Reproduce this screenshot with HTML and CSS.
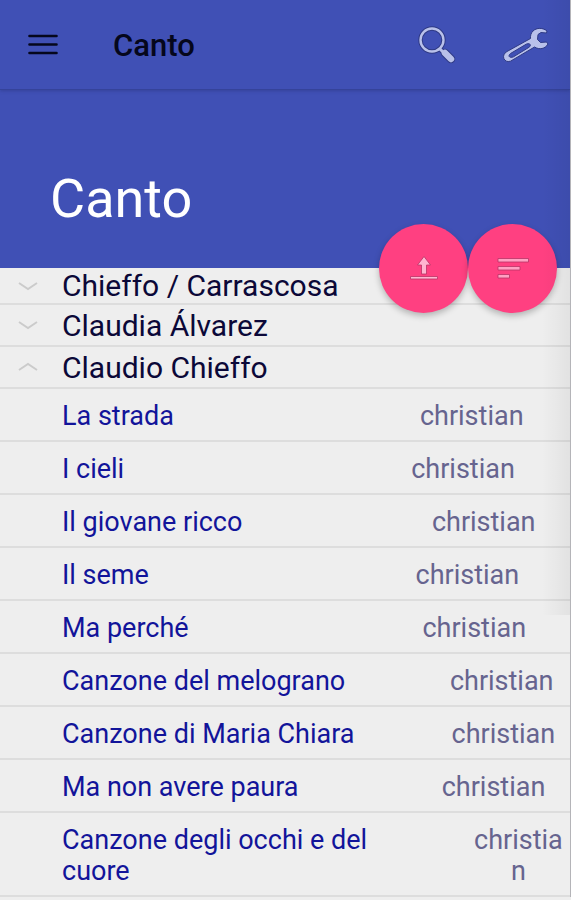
FILE: index.html
```html
<!DOCTYPE html>
<html lang="it">
<head>
<meta charset="utf-8">
<meta name="viewport" content="width=device-width, initial-scale=1">
<title>Canto</title>
<link rel="stylesheet" href="styles.css">
</head>
<body>
<header class="bar">
  <button class="icon-btn" aria-label="Menu">
    <svg width="30" height="22" viewBox="0 0 30 22" stroke="#05071c" stroke-width="2.6" stroke-linecap="round"><path d="M1.500 2h27M1.500 10.500h27M1.500 19h27"/></svg>
  </button>
  <div class="bar-title">Canto</div>
  <button class="icon-btn" aria-label="Cerca">
    <svg width="40" height="40" viewBox="0 0 40 40" fill="none" stroke-linecap="round">
      <g stroke="#2f3a85"><circle cx="15" cy="15" r="11.5" stroke-width="4.400"/><path d="M23 24l3 3" stroke-width="5"/><path d="M28 28l6 6" stroke-width="8.500"/></g>
      <g stroke="#b9c1ea"><circle cx="15" cy="15" r="11.5" stroke-width="2.400"/><path d="M23 24l4 4" stroke-width="3"/><path d="M28 28l6 6" stroke-width="6.5"/></g>
    </svg>
  </button>
  <button class="icon-btn wrench" aria-label="Impostazioni">
    <svg width="48" height="40" viewBox="0 0 48 40">
      <path fill="#b9c1ea" fill-rule="evenodd" stroke="#2f3a85" stroke-width="1" stroke-linejoin="round" d="M46 6C42 2.500 35.500 2.500 32 6C30 8 29.300 10.500 29.500 13.500L6 26.500C-0.500 30 3 38.500 9.500 36.200L33.500 22C38.500 25 44 24 47 19L45.500 17L39.500 17.500L36.500 14.500L37 9.500L40 7.500L45.500 8ZM9.500 28.500L25.500 19C29.500 17.800 30.500 20.500 28 22.300L12.500 31.800C8.500 33.500 6.500 31 9.500 28.500Z"/>
    </svg>
  </button>
</header>
<section class="hero">
  <h1>Canto</h1>
  <div class="fabs">
    <button class="fab" aria-label="Carica">
      <svg width="32" height="28" viewBox="0 0 32 28" fill="#ffb5d0" stroke="#b93366" stroke-width="0.800"><path d="M16 1.500l6.500 8.500h-4v9h-5v-9h-4zM2.500 21.500h27v2.500h-27z"/></svg>
    </button>
    <button class="fab" aria-label="Ordina">
      <svg width="34" height="24" viewBox="0 0 34 24" fill="#ffa0c2" stroke="#b93366" stroke-width="0.800"><path d="M2 1.500h30.500V5H2zM2 9.500h22V13H2zM2 17.500h11.500V21H2z"/></svg>
    </button>
  </div>
</section>
<main>
  <button class="group"><svg width="20" height="10" viewBox="0 0 20 10"><path d="M1 2l9 6 9-6"/></svg><span>Chieffo / Carrascosa</span></button>
  <button class="group"><svg width="20" height="10" viewBox="0 0 20 10"><path d="M1 2l9 6 9-6"/></svg><span>Claudia Álvarez</span></button>
  <button class="group" aria-expanded="true"><svg width="20" height="10" viewBox="0 0 20 10"><path d="M1 8l9-6 9 6"/></svg><span>Claudio Chieffo</span></button>
  <ul class="songs">
    <li><a href="#">La strada</a><span>christian</span></li>
    <li><a href="#">I cieli</a><span>christian</span></li>
    <li><a href="#">Il giovane ricco</a><span>christian</span></li>
    <li><a href="#">Il seme</a><span>christian</span></li>
    <li><a href="#">Ma perché</a><span>christian</span></li>
    <li><a href="#">Canzone del melograno</a><span>christian</span></li>
    <li><a href="#">Canzone di Maria Chiara</a><span>christian</span></li>
    <li><a href="#">Ma non avere paura</a><span>christian</span></li>
    <li><a href="#">Canzone degli occhi e del cuore</a><span>christian</span></li>
  </ul>
</main>
<div class="edge"></div>
</body>
</html>
```
FILE: styles.css
```css
* { box-sizing: border-box; }
body {
  position: relative;
  margin: 0;
  background: #eeeeee;
  border-right: 1px solid #b4b4b8;
  font-family: Roboto, "Liberation Sans", sans-serif;
}
button {
  border: 0;
  padding: 0;
  background: none;
  color: inherit;
  font: inherit;
  cursor: pointer;
}
svg { display: block; }
.bar {
  position: relative;
  display: flex;
  align-items: center;
  height: 90px;
  padding: 0 21px 0 28px;
  background: #4050b5;
  border-bottom: 1px solid #35439a;
  box-shadow: 0 1px 3px #35439a;
}
.bar-title {
  flex: 1;
  margin-left: 55px;
  padding-top: 2px;
  color: #05071c;
  font-size: 31px;
  font-weight: 500;
}
.wrench { margin-left: 44px; }
.hero {
  height: 178px;
  padding: 75px 14px 0 50px;
  background: #4050b5;
}
h1 {
  margin: 0;
  color: #ffffff;
  font-size: 54px;
  font-weight: 400;
  line-height: 68px;
}
.fabs {
  position: absolute;
  top: 224px;
  right: 13px;
  display: flex;
}
.fab {
  display: grid;
  place-items: center;
  width: 89px;
  height: 89px;
  border-radius: 50%;
  background: #ff4081;
  box-shadow: 0 3px 6px rgba(0, 0, 0, 0.25);
}
.group {
  display: flex;
  align-items: center;
  width: 100%;
  height: 42px;
  padding-left: 18px;
  border-bottom: 2px solid #dddddd;
  color: #0b0838;
  font-size: 30px;
  line-height: 36px;
  text-align: left;
}
.group span { padding-top: 2px; }
.group:first-child { height: 37px; }
.group:first-child span { padding-top: 0; }
.group svg {
  margin-right: 24px;
  fill: none;
  stroke: #cbcbcb;
  stroke-width: 2;
}
.songs {
  margin: 0;
  padding: 0;
  list-style: none;
}
.songs li {
  display: flex;
  padding: 12px 0 8px;
  border-bottom: 2px solid #dddddd;
  font-size: 27px;
  line-height: 31px;
}
.songs a {
  flex: 13 1 auto;
  padding: 0 27px 0 62px;
  color: #12149a;
  text-decoration: none;
}
.songs span {
  flex: 7 1 auto;
  min-width: 0;
  color: #66648f;
  text-align: center;
  overflow-wrap: anywhere;
}
.edge {
  position: absolute;
  top: 0;
  right: 0;
  width: 28px;
  height: 615px;
  background: linear-gradient(to right, transparent, rgba(0, 0, 0, 0.05));
  pointer-events: none;
}
```
